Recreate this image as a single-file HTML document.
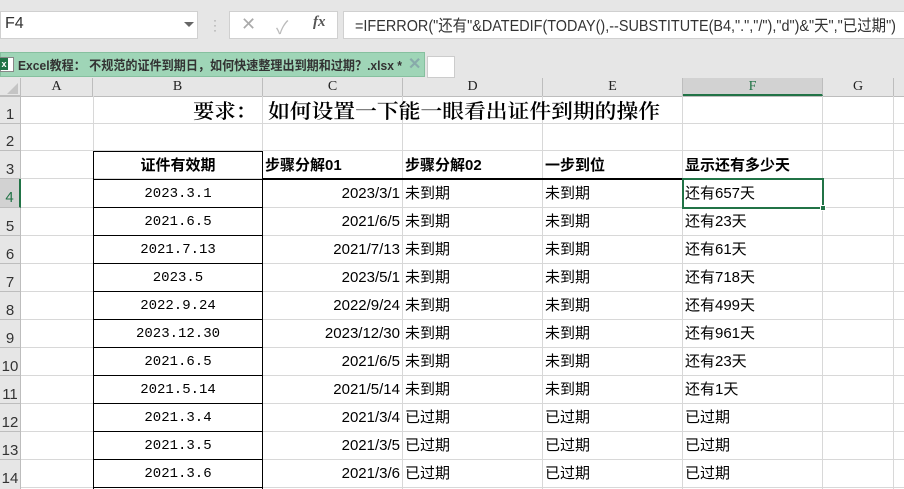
<!DOCTYPE html>
<html><head><meta charset="utf-8"><style>
*{margin:0;padding:0;box-sizing:border-box}
html,body{width:904px;height:489px;overflow:hidden}
body{background:#e6e6e6;position:relative;font-family:"Liberation Sans","Noto Sans CJK SC",sans-serif}
.a{position:absolute}
.c{position:absolute;font-size:15px;color:#000;white-space:nowrap;line-height:28px}
.hdr{position:absolute;top:78px;height:18px;font-family:"Liberation Serif","Noto Serif CJK SC",serif;font-size:14px;color:#222;text-align:center;line-height:18px;border-right:1px solid #bdbdbd;background:#e6e6e6}
.rh{position:absolute;left:0;width:21px;font-family:"Liberation Sans",sans-serif;font-size:15px;color:#333;text-align:center;background:#e6e6e6;border-bottom:1px solid #bdbdbd;border-right:1px solid #bdbdbd}
.vl{position:absolute;width:1px;background:#d8d8d8;top:96px;height:393px}
.hl{position:absolute;height:1px;background:#d8d8d8;left:21px;width:883px}
.mono{font-family:"Liberation Mono","Noto Sans CJK SC",monospace;font-size:14px}
svg{position:absolute}
</style></head><body>
<!-- top bar -->
<div class="a" style="left:0;top:11px;width:198px;height:28px;background:#fff;border:1px solid #d0d0d0"></div>
<div class="a" style="left:5px;top:15px;font-size:16px;color:#333">F4</div>
<div class="a" style="left:184px;top:22px;width:0;height:0;border-left:5px solid transparent;border-right:5px solid transparent;border-top:5px solid #666"></div>
<div class="a" style="left:213px;top:18px;color:#999;font-size:12px;line-height:5px">·<br>·<br>·</div>
<div class="a" style="left:229px;top:11px;width:109px;height:28px;background:#fff;border:1px solid #d0d0d0"></div>
<div class="a" style="left:241px;top:14px;font-size:18px;color:#aaa">✕</div>
<div class="a" style="left:276px;top:14px;font-size:18px;color:#bbb">✓</div>
<div class="a" style="left:313px;top:14px;font-size:15px;color:#555;font-style:italic;font-family:'Liberation Serif',serif;font-weight:bold">fx</div>
<div class="a" style="left:343px;top:11px;width:561px;height:28px;background:#fff;border:1px solid #d0d0d0;border-right:none"></div>
<svg style="left:0;top:0" width="904" height="80"><text x="355" y="31" font-size="16" fill="#333" font-family="Liberation Sans, Noto Sans CJK SC, sans-serif" textLength="541" lengthAdjust="spacingAndGlyphs">=IFERROR("还有"&amp;DATEDIF(TODAY(),--SUBSTITUTE(B4,".","/"),"d")&amp;"天","已过期")</text></svg>
<!-- tab bar -->
<div class="a" style="left:0;top:52px;width:425px;height:25px;background:#9fd5b7;border:1px solid #86c09f"></div>
<div class="a" style="left:0;top:57px;width:14px;height:15px;background:#fff;border:1px solid #888"></div>
<div class="a" style="left:0;top:58px;width:8px;height:12px;background:#217346;color:#fff;font-size:9px;font-weight:bold;line-height:12px;text-align:center">x</div>
<svg style="left:0;top:0" width="904" height="80"><text x="18" y="70" font-size="13" font-weight="bold" fill="#333" font-family="Liberation Sans, Noto Sans CJK SC, sans-serif" textLength="384" lengthAdjust="spacingAndGlyphs">Excel教程： 不规范的证件到期日，如何快速整理出到期和过期？.xlsx *</text></svg>
<div class="a" style="left:408px;top:54px;font-size:16px;color:#8aa;font-weight:bold">✕</div>
<div class="a" style="left:427px;top:56px;width:28px;height:22px;background:#fff;border:1px solid #ccc"></div>
<!-- sheet -->
<div class="a" style="left:0;top:78px;width:904px;height:411px;background:#fff"></div>
<div class="hdr" style="left:0;width:21px;border-bottom:1px solid #bdbdbd"></div>
<div class="a" style="left:7px;top:83px;width:0;height:0;border-left:11px solid transparent;border-bottom:11px solid #c4c4c4"></div>
<div class="hdr" style="left:21px;width:72px">A</div>
<div class="hdr" style="left:93px;width:170px">B</div>
<div class="hdr" style="left:263px;width:140px">C</div>
<div class="hdr" style="left:403px;width:140px">D</div>
<div class="hdr" style="left:543px;width:140px">E</div>
<div class="hdr" style="left:683px;width:140px;background:#d2d2d2;color:#217346;border-bottom:2px solid #217346">F</div>
<div class="hdr" style="left:823px;width:71px">G</div>
<div class="hdr" style="left:894px;width:10px;border-right:none"></div>
<div class="a" style="left:0;top:96px;width:904px;height:1px;background:#bdbdbd"></div>
<!-- gridlines -->
<div class="vl" style="left:93px"></div><div class="vl" style="left:262px"></div><div class="vl" style="left:402px"></div><div class="vl" style="left:542px"></div><div class="vl" style="left:682px"></div><div class="vl" style="left:822px"></div><div class="vl" style="left:893px"></div>
<div class="hl" style="top:123px"></div><div class="hl" style="top:150px"></div><div class="hl" style="top:178px"></div>
<div class="hl" style="top:207px"></div><div class="hl" style="top:235px"></div><div class="hl" style="top:263px"></div><div class="hl" style="top:291px"></div><div class="hl" style="top:319px"></div><div class="hl" style="top:347px"></div><div class="hl" style="top:375px"></div><div class="hl" style="top:403px"></div><div class="hl" style="top:431px"></div><div class="hl" style="top:459px"></div><div class="hl" style="top:487px"></div>
<!-- row headers -->
<div class="rh" style="top:97px;height:27px;line-height:36px">1</div>
<div class="rh" style="top:124px;height:27px;line-height:36px">2</div>
<div class="rh" style="top:151px;height:28px;line-height:38px">3</div>
<div class="rh" style="top:179px;height:29px;line-height:38px;background:#d2d2d2;color:#217346;border-right:2px solid #217346">4</div>
<div class="rh" style="top:208px;height:28px;line-height:38px">5</div>
<div class="rh" style="top:236px;height:28px;line-height:38px">6</div>
<div class="rh" style="top:264px;height:28px;line-height:38px">7</div>
<div class="rh" style="top:292px;height:28px;line-height:38px">8</div>
<div class="rh" style="top:320px;height:28px;line-height:38px">9</div>
<div class="rh" style="top:348px;height:28px;line-height:38px">10</div>
<div class="rh" style="top:376px;height:28px;line-height:38px">11</div>
<div class="rh" style="top:404px;height:28px;line-height:38px">12</div>
<div class="rh" style="top:432px;height:28px;line-height:38px">13</div>
<div class="rh" style="top:460px;height:29px;line-height:38px;border-bottom:none">14</div>
<!-- title -->
<svg style="left:0;top:0" width="904" height="130" font-family="Liberation Serif, Noto Serif CJK SC, serif" font-size="20" font-weight="600" fill="#000">
<text x="193" y="118" textLength="64" lengthAdjust="spacingAndGlyphs">要求：</text>
<text x="268" y="118" textLength="392" lengthAdjust="spacingAndGlyphs">如何设置一下能一眼看出证件到期的操作</text>
</svg>
<!-- B column box -->
<div class="a" style="left:93px;top:151px;width:170px;height:338px;border:1px solid #000;border-bottom:none"></div>
<div class="a" style="left:93px;top:179px;width:170px;height:1px;background:#000"></div>
<div class="a" style="left:93px;top:207px;width:170px;height:1px;background:#000"></div>
<div class="a" style="left:93px;top:235px;width:170px;height:1px;background:#000"></div>
<div class="a" style="left:93px;top:263px;width:170px;height:1px;background:#000"></div>
<div class="a" style="left:93px;top:291px;width:170px;height:1px;background:#000"></div>
<div class="a" style="left:93px;top:319px;width:170px;height:1px;background:#000"></div>
<div class="a" style="left:93px;top:347px;width:170px;height:1px;background:#000"></div>
<div class="a" style="left:93px;top:375px;width:170px;height:1px;background:#000"></div>
<div class="a" style="left:93px;top:403px;width:170px;height:1px;background:#000"></div>
<div class="a" style="left:93px;top:431px;width:170px;height:1px;background:#000"></div>
<div class="a" style="left:93px;top:459px;width:170px;height:1px;background:#000"></div>
<div class="a" style="left:93px;top:487px;width:170px;height:1px;background:#000"></div>
<div class="a" style="left:263px;top:178px;width:420px;height:2px;background:#000"></div>
<!-- header row 3 -->
<div class="c" style="left:93px;width:170px;text-align:center;top:152px;font-weight:bold">证件有效期</div>
<div class="c" style="left:265px;top:152px;font-weight:bold">步骤分解01</div>
<div class="c" style="left:405px;top:152px;font-weight:bold">步骤分解02</div>
<div class="c" style="left:545px;top:152px;font-weight:bold">一步到位</div>
<div class="c" style="left:685px;top:152px;font-weight:bold">显示还有多少天</div>
<!-- data rows -->
<div id="rows"></div>
<script>
var d=[["2023.3.1","2023/3/1","未到期","未到期","还有657天"],["2021.6.5","2021/6/5","未到期","未到期","还有23天"],["2021.7.13","2021/7/13","未到期","未到期","还有61天"],["2023.5","2023/5/1","未到期","未到期","还有718天"],["2022.9.24","2022/9/24","未到期","未到期","还有499天"],["2023.12.30","2023/12/30","未到期","未到期","还有961天"],["2021.6.5","2021/6/5","未到期","未到期","还有23天"],["2021.5.14","2021/5/14","未到期","未到期","还有1天"],["2021.3.4","2021/3/4","已过期","已过期","已过期"],["2021.3.5","2021/3/5","已过期","已过期","已过期"],["2021.3.6","2021/3/6","已过期","已过期","已过期"]];
var h="";for(var i=0;i<d.length;i++){var t=180+i*28;
h+='<div class="c mono" style="left:93px;width:170px;text-align:center;top:'+t+'px">'+d[i][0]+'</div>';
h+='<div class="c" style="left:263px;width:137px;text-align:right;top:'+t+'px">'+d[i][1]+'</div>';
h+='<div class="c" style="left:405px;top:'+t+'px">'+d[i][2]+'</div>';
h+='<div class="c" style="left:545px;top:'+t+'px">'+d[i][3]+'</div>';
h+='<div class="c" style="left:685px;top:'+t+'px">'+d[i][4]+'</div>';}
document.getElementById("rows").innerHTML=h;
</script>
<!-- selection -->
<div class="a" style="left:682px;top:178px;width:142px;height:31px;border:2px solid #217346"></div>
<div class="a" style="left:820px;top:205px;width:6px;height:6px;background:#217346;border:1px solid #fff"></div>
</body></html>
